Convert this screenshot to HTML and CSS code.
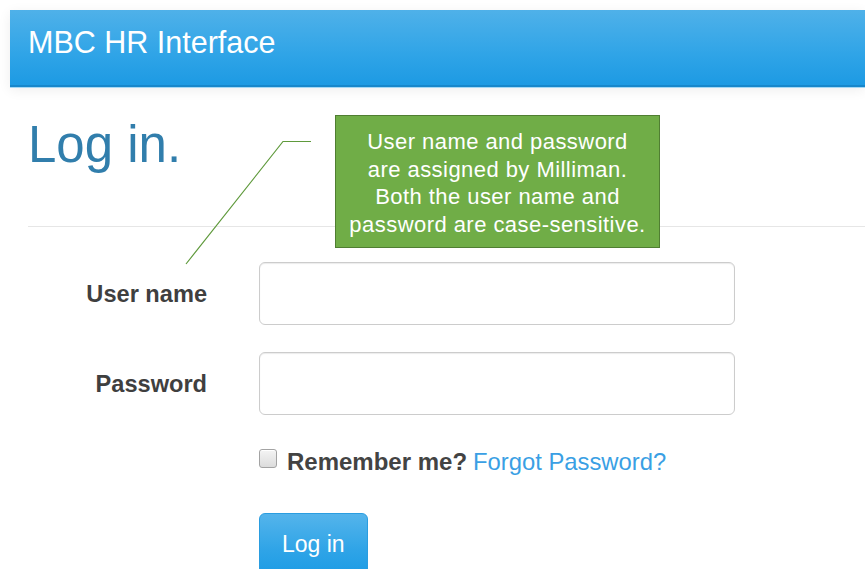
FILE: index.html
```html
<!DOCTYPE html>
<html lang="en">
<head>
<meta charset="utf-8">
<title>Log in - MBC HR Interface</title>
<link rel="stylesheet" href="styles.css">
</head>
<body>
<div class="page">
  <header class="navbar">
    <span class="brand">MBC HR Interface</span>
  </header>

  <main class="content">
    <h2 class="title">Log in.</h2>
    <hr class="rule">

    <form class="login">
      <div class="fields">
        <label class="field-label" for="username">User name</label>
        <input class="field-input" id="username" type="text">
        <label class="field-label" for="password">Password</label>
        <input class="field-input" id="password" type="password">
      </div>

      <div class="remember">
        <input class="check" id="remember" type="checkbox">
        <label class="remember-label" for="remember">Remember me?</label>
        <a class="forgot" href="#">Forgot Password?</a>
      </div>

      <button class="btn-login" type="button">Log in</button>
    </form>
  </main>

  <!-- annotation: leader line from the note to the user name label -->
  <svg class="leader" width="865" height="569" viewBox="0 0 865 569">
    <polyline points="311,141.5 283,141.5 186,264" fill="none" stroke="#5f9a3c" stroke-width="1.2"/>
  </svg>
  <div class="note">User name and password<br>are assigned by Milliman.<br>Both the user name and<br>password are case-sensitive.</div>
</div>
</body>
</html>
```

FILE: styles.css
```css
html, body {
  margin: 0;
  padding: 0;
  overflow: hidden;
  background: #ffffff;
}

body {
  font-family: "Liberation Sans", Arial, sans-serif;
  color: #444444;
}

.page {
  position: relative;
  width: 865px;
  height: 569px;
  padding: 10px 0 0 10px;
  box-sizing: border-box;
}

/* top navigation bar */
.navbar {
  height: 77px;
  box-sizing: border-box;
  padding: 15px 18px 0;
  background: linear-gradient(#4fb1e9, #2fa4e7 60%, #1d9ae3);
  border-bottom: 2px solid #1787cb;
  box-shadow: 0 1px 0 #a6d8f4, 0 3px 12px rgba(0, 0, 0, 0.07);
}

.brand {
  display: block;
  font-size: 30.5px;
  line-height: 35px;
  color: #ffffff;
}

.content {
  padding-left: 18px;
}

.title {
  margin: 30px 0 0 0;
  font-size: 51px;
  line-height: 56px;
  font-weight: normal;
  color: #317eac;
}

.rule {
  margin: 53px 0 0;
  height: 0;
  border: 0;
  border-top: 1px solid #e6e6e6;
}

.fields {
  margin-top: 35px;
  display: grid;
  grid-template-columns: 179px 476px;
  column-gap: 52px;
  row-gap: 27px;
  align-items: center;
}

.field-label {
  text-align: right;
  font-size: 23.6px;
  line-height: 28px;
  font-weight: bold;
  color: #3f3f3f;
}

.field-input {
  height: 63px;
  box-sizing: border-box;
  margin: 0;
  border: 1px solid #cccccc;
  border-radius: 6px;
  background: #ffffff;
  box-shadow: inset 0 1px 1px rgba(0, 0, 0, 0.08);
}

.remember {
  margin-top: 33px;
  padding-left: 231px;
  display: flex;
  align-items: flex-start;
}

.check {
  appearance: none;
  -webkit-appearance: none;
  width: 18px;
  height: 19px;
  margin: 1px 10px 0 0;
  box-sizing: border-box;
  border: 1px solid #a3a3a3;
  border-radius: 3px;
  background: linear-gradient(#f4f4f4, #dcdcdc);
  box-shadow: inset 0 1px 0 #ffffff;
}

.remember-label {
  font-size: 24px;
  line-height: 28px;
  font-weight: bold;
  color: #434343;
}

.forgot {
  margin-left: 6px;
  font-size: 23.8px;
  line-height: 28px;
  color: #3a9fe4;
  text-decoration: none;
}

.btn-login {
  display: block;
  margin: 37px 0 0 231px;
  padding: 15px 22px;
  font-family: "Liberation Sans", Arial, sans-serif;
  font-size: 23px;
  line-height: 30px;
  color: #ffffff;
  background: linear-gradient(#54b4eb, #2fa4e7 60%, #1d9ce5);
  border: 1px solid #2a9de0;
  border-radius: 6px;
}

/* annotation overlay */
.leader {
  position: absolute;
  left: 0;
  top: 0;
  pointer-events: none;
}

.note {
  position: absolute;
  left: 335px;
  top: 115px;
  width: 325px;
  height: 133px;
  box-sizing: border-box;
  padding-top: 12px;
  border: 1.5px solid #507e32;
  background: #70ad47;
  color: #ffffff;
  text-align: center;
  font-size: 22px;
  letter-spacing: 0.45px;
  line-height: 27.6px;
}
```
